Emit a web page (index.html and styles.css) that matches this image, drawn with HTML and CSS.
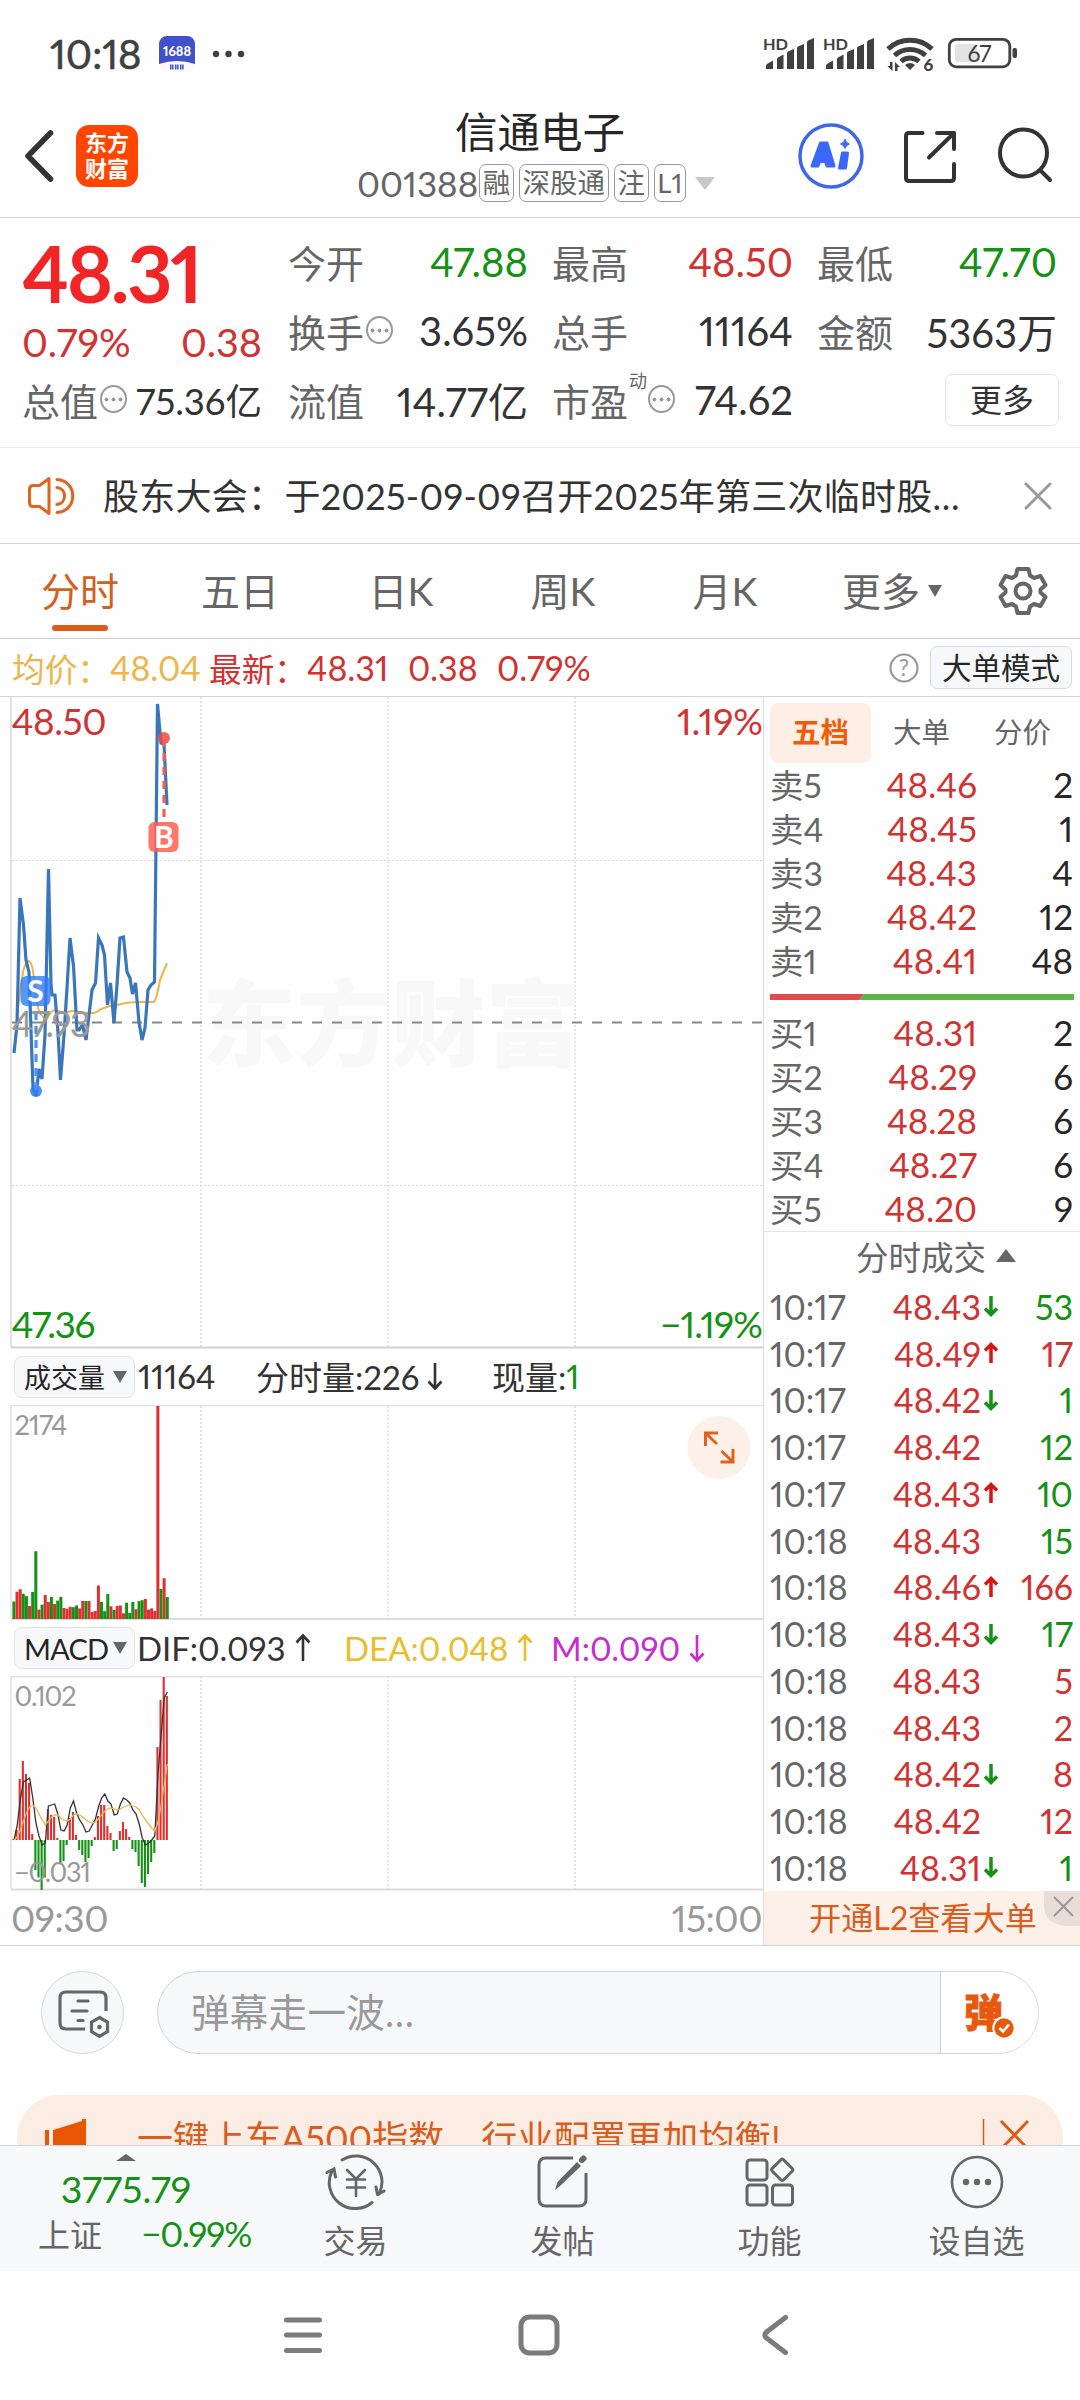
FILE: index.html
```html
<!DOCTYPE html>
<html lang="zh-CN">
<head>
<meta charset="utf-8">
<title>信通电子 001388</title>
<link rel="stylesheet" href="styles.css">
</head>
<body>
<div class="screen">
  <div class="status">
    <span class="clock">10:18</span>
    <svg class="app-badge" width="36" height="36" viewBox="0 0 36 36"><rect width="36" height="36" rx="8" fill="#fafaff"/><path d="M0 28V8a8 8 0 0 1 8-8h20a8 8 0 0 1 8 8v20Q18 22 0 28Z" fill="#4150cb"/><text x="18" y="20" font-size="13" font-weight="900" fill="#fff" text-anchor="middle" textLength="28" lengthAdjust="spacingAndGlyphs">1688</text><path d="M11 31h4M16 31h4M21 31h4" stroke="#4150cb" stroke-width="5" stroke-dasharray="1.5 .6"/></svg>
    <svg class="dots" width="34" height="8" viewBox="0 0 34 8" fill="#404040"><circle cx="4" cy="4" r="3.2"/><circle cx="16.500" cy="4" r="3.200"/><circle cx="29" cy="4" r="3.200"/></svg>
    <svg class="status-icons" width="260" height="40" viewBox="760 35 260 40" fill="#404040">
      <g id="sig"><text x="763" y="50.500" font-size="15.500" font-weight="700" textLength="25" lengthAdjust="spacingAndGlyphs">HD</text><path d="M766 70V67q0-1 1-2l6-3.500V70ZM777 70V60q0-1 1-1.500l5.500-3V70ZM787 70V54q0-1 1-1.500l6-2.500V70ZM797 70V49q0-1 1-1.500l6-2.500V70ZM807 70V44q0-2 1-2.500l6-2.500V70Z"/></g>
      <use href="#sig" x="60"/>
      <g fill="none" stroke="#404040" stroke-width="5"><path d="M888 50a32 32 0 0 1 44 0"/><path d="M894.500 56.500a23 23 0 0 1 31 0"/><path d="M901 62.500a13.500 13.500 0 0 1 18 0"/></g>
      <path d="M905 66q5-4 10 0l-5 5ZM890 63h2.500v9l-5-5h2.500ZM895 72v-9l5 5h-2.500v4Z"/>
      <text x="923.500" y="71.500" font-size="17" font-weight="900">6</text>
      <rect x="955" y="45" width="22" height="18" rx="3" fill="#e3e3e3"/>
      <rect x="949.300" y="40.300" width="60.500" height="27.500" rx="7" fill="none" stroke="#404040" stroke-width="2.800"/>
      <rect x="1012.500" y="49" width="4.500" height="10" rx="2"/>
      <text x="967.500" y="62.500" font-size="23" textLength="24">67</text>
    </svg>
  </div>

  <div class="header">
    <svg class="back" width="32" height="60" viewBox="25 126 32 60"><path d="M51.500 133 29 156l22.500 23" fill="none" stroke="#333" stroke-width="5.500" stroke-linecap="round" stroke-linejoin="round"/></svg>
    <div class="logo"><span>东方</span><span>财富</span></div>
    <div class="title">
      <h1>信通电子</h1>
      <div class="code"><span class="num">001388</span><b>融</b><b>深股通</b><b>注</b><b>L1</b><i class="tri-down"></i></div>
    </div>
    <svg class="head-icons" width="260" height="70" viewBox="796 121 260 70" fill="none" stroke="#333" stroke-width="4" stroke-linecap="round">
      <circle cx="831" cy="156" r="31" stroke="#3f66e6" stroke-width="3.500"/>
      <g fill="#3b67fb" stroke="#3b67fb" stroke-width="3" stroke-linejoin="round"><path fill-rule="evenodd" d="M812 166 820.500 143H827L834 166H827L825.500 161.500H819.500L818 166ZM821.500 155H825L823.500 150Z"/><path d="M842.500 153H847.500L845.500 168H839.500Z"/><path d="M845 139.500Q846 143 849.500 144 846 145 845 148.500 844 145 840.500 144 844 143 845 139.500Z" stroke-width="1"/></g>
      <path d="M922.500 133H909q-3 0-3 3V178q0 3 3 3h42q3 0 3-3V164M937 133h17V149M954 133 929 157.500" stroke-linejoin="round"/>
      <circle cx="1023.500" cy="153" r="23.500"/><path d="m1041 171 9 9"/>
    </svg>
  </div>

  <div class="quote">
    <div class="last">
      <strong>48.31</strong>
      <div class="pair red"><span>0.79%</span><span>0.38</span></div>
      <div class="pair cap"><label>总值<i class="more"></i></label><span>75.36亿</span></div>
    </div>
    <div class="facts">
      <div><label>今开</label><span class="green">47.88</span></div>
      <div><label>最高</label><span class="red">48.50</span></div>
      <div><label>最低</label><span class="green">47.70</span></div>
      <div><label>换手<i class="more"></i></label><span>3.65%</span></div>
      <div><label>总手</label><span>11164</span></div>
      <div><label>金额</label><span>5363万</span></div>
      <div><label>流值</label><span>14.77亿</span></div>
      <div><label>市盈<sup>动</sup><i class="more"></i></label><span>74.62</span></div>
      <div class="end"><button class="btn-more">更多</button></div>
    </div>
  </div>

  <div class="notice">
    <svg width="50" height="40" viewBox="26 475 50 40" fill="none" stroke="#df6420" stroke-width="3" stroke-linejoin="round" stroke-linecap="round"><path d="M49 477.500V512.500L39.500 505.500H33q-3.500 0-3.500-4V488.500q0-4 3.500-4h6.500ZM57 478.500c21 1 21 32 0 33M57 486.500c10 1 10 16 0 17"/></svg>
    <p>股东大会：于2025-09-09召开2025年第三次临时股…</p>
    <svg width="28" height="28" viewBox="0 0 28 28" stroke="#999" stroke-width="3" stroke-linecap="round"><path d="m2 2 24 24M26 2 2 26"/></svg>
  </div>

  <div class="tabs">
    <span class="on">分时</span><span>五日</span><span>日K</span><span>周K</span><span>月K</span><span>更多<i class="tri-small"></i></span>
    <svg class="gear" width="50" height="52" viewBox="-25 -26 50 52" fill="none" stroke="#666" stroke-width="4" stroke-linejoin="round"><path d="M-5.500-22H5.500L7-15.500 11-13 17.500-15 22.500-6 17.500-1.500V1.500L22.500 6 17.500 15 11 13 7 15.500 5.500 22H-5.500L-7 15.500-11 13-17.500 15-22.500 6-17.500 1.500V-1.500L-22.500-6-17.500-15-11-13-7-15.500Z"/><circle r="7.500"/></svg>
  </div>

  <div class="info">
    <span class="avg">均价：<em>48.04</em></span>
    <span class="new">最新：<em>48.31</em><em>0.38</em><em>0.79%</em></span>
    <svg class="help" width="30" height="30" viewBox="0 0 30 30"><circle cx="15" cy="15" r="13.500" fill="none" stroke="#999" stroke-width="2.200"/><text x="15" y="23" font-size="23" fill="#999" text-anchor="middle">?</text></svg>
    <button class="btn-mode">大单模式</button>
  </div>

  <div class="market">
    <div class="charts">
      <svg class="price-chart" width="763" height="652" viewBox="0 697 763 652">
        <text class="mark" x="202" y="1059" font-size="94" textLength="378">东方财富</text>
        <g class="grid"><path d="M201 697V1347M388 697V1347M575 697V1347M12 860.500H763M12 1185.500H763"/></g>
        <path d="M11 697V1348" stroke="#e2e2e2" stroke-width="2"/>
        <path d="M11 1347.500H763" stroke="#d0d0d0" stroke-width="2"/>
        <path d="M12 1022.500H763" stroke="#888" stroke-width="1.800" stroke-dasharray="10 10"/>
        <path d="M14 1053 18 1008Q21 984 23 972 26 960 29 961 33 964 34 980 36 1005 40 1013 43 1018 47 1019 51 1010 55 1010L63 1013 72 1011 86 1013H94Q98 1012 101 1009 108 1006 117 1005 127 1002 140 1002H154Q157 998 160 980L167 963" fill="none" stroke="#edb44c" stroke-width="2"/>
        <path d="M14 1053 17 1025 20 898 23.500 925 26 960 29 972 33 1088 36 1096 39 1069 42 1079 45 1035 48.500 869 51 984 52 995H55L58 1032 60.500 1080 64 1035 67 988 70 938 73.500 966 77 1030H79L82.500 1025 86 1040 89 1015 92 990 95.500 983 98.500 938 102 945 104.500 955 107.500 1005 110.500 983 114 1023 117 985 120 938 123.500 937 127 972 130 978 132.500 994 135.500 983 139 1022 142 1040 145 1028 148 990 151 985 154.500 982 157.500 704 161 743 164 744 167 805" fill="none" stroke="#3a76bb" stroke-width="3.200"/>
        <circle cx="36" cy="1091" r="6" fill="#2e7df5" opacity=".85"/><path d="M36 1012V1090" stroke="#4b93f7" stroke-width="3.200" stroke-dasharray="8 6"/>
        <circle cx="164" cy="738" r="6" fill="#ee4a40" opacity=".85"/><path d="M164 739V817" stroke="#ee6058" stroke-width="3.200" stroke-dasharray="8 6"/>
        <rect x="20.500" y="976" width="30" height="30" rx="6" fill="#2e7df5" opacity=".8"/><text x="35.500" y="1002" font-size="30" font-weight="700" text-anchor="middle" fill="#fff">S</text>
        <rect x="148.500" y="822" width="30" height="30" rx="6" fill="#fb6052" opacity=".85"/><text x="164" y="848" font-size="30" font-weight="700" text-anchor="middle" fill="#fff">B</text>
        <text class="red" x="11.500" y="734.500" font-size="37" textLength="95">48.50</text>
        <text class="red" x="677" y="734.500" font-size="37" textLength="86">1.19%</text>
        <text x="11.500" y="1036.500" font-size="36" fill="#999" textLength="79">47.93</text>
        <text class="green" x="11.500" y="1338" font-size="37" textLength="84">47.36</text>
        <text class="green" x="660" y="1338" font-size="37" textLength="103">−1.19%</text>
      </svg>

      <div class="ind"><button>成交量<i class="tri-small"></i></button><span class="v1">11164</span><span class="v2">分时量:226<svg class="arr" viewBox="0 0 16 30"><path d="M8 2V27M1.500 20.500 8 27.500 14.500 20.500"/></svg></span><span class="v3">现量:<em class="green">1</em></span></div>
      <svg class="vol-chart" width="763" height="215" viewBox="0 1405 763 215">
        <g class="grid"><path d="M201 1406V1619M388 1406V1619M575 1406V1619"/></g>
        <path d="M11 1619V1405.500H763" fill="none" stroke="#e0e0e0" stroke-width="1.500"/><path d="M11 1619H763" stroke="#d0d0d0" stroke-width="1.600"/>
        <g id="volume"></g>
        <text x="14.500" y="1434.500" font-size="27" fill="#999" textLength="53">2174</text>
        <circle cx="719" cy="1447.500" r="31.500" fill="#fdf0e9"/>
        <path d="M717 1444 705.500 1433M705.500 1446V1433H718M721.500 1451 733 1462M733 1449V1462H720.500" fill="none" stroke="#dc6320" stroke-width="3"/>
      </svg>

      <div class="ind macd"><button>MACD<i class="tri-small"></i></button><span class="m1">DIF:0.093<svg class="arr" viewBox="0 0 16 30"><path d="M8 28V3M1.500 9.500 8 2.500 14.500 9.500"/></svg></span><span class="m2">DEA:0.048<svg class="arr" viewBox="0 0 16 30"><path d="M8 28V3M1.500 9.500 8 2.500 14.500 9.500"/></svg></span><span class="m3">M:0.090<svg class="arr" viewBox="0 0 16 30"><path d="M8 2V27M1.500 20.500 8 27.500 14.500 20.500"/></svg></span></div>
      <svg class="macd-chart" width="763" height="215" viewBox="0 1676 763 215">
        <g class="grid"><path d="M201 1676V1889M388 1676V1889M575 1676V1889"/></g>
        <path d="M11 1889V1676.500H763" fill="none" stroke="#e0e0e0" stroke-width="1.500"/><path d="M11 1889.500H763" stroke="#dcdcdc" stroke-width="2"/>
        <g id="macd"></g>
        <path id="dif" fill="none" stroke="#333" stroke-width="1.300"/>
        <path id="dea" fill="none" stroke="#edb44c" stroke-width="1.300"/>
        <text x="14.500" y="1705.500" font-size="27" fill="#999" textLength="62">0.102</text>
        <text x="14" y="1881.500" font-size="27" fill="#999" textLength="77">−0.031</text>
      </svg>
      <div class="axis"><span>09:30</span><span>15:00</span></div>
    </div>

    <div class="side">
      <div class="side-tabs"><span class="on">五档</span><span>大单</span><span>分价</span></div>
      <div class="book">
        <div><label>卖5</label><b>48.46</b><i>2</i></div>
        <div><label>卖4</label><b>48.45</b><i>1</i></div>
        <div><label>卖3</label><b>48.43</b><i>4</i></div>
        <div><label>卖2</label><b>48.42</b><i>12</i></div>
        <div><label>卖1</label><b>48.41</b><i>48</i></div>
      </div>
      <svg class="ratio" width="304" height="6" viewBox="0 0 304 6"><path d="M0 0H94L89 6H0Z" fill="#e34a4a"/><path d="M94 0H304V6H89Z" fill="#5bb646"/></svg>
      <div class="book">
        <div><label>买1</label><b>48.31</b><i>2</i></div>
        <div><label>买2</label><b>48.29</b><i>6</i></div>
        <div><label>买3</label><b>48.28</b><i>6</i></div>
        <div><label>买4</label><b>48.27</b><i>6</i></div>
        <div><label>买5</label><b>48.20</b><i>9</i></div>
      </div>
      <div class="deal-head">分时成交<i class="tri-up"></i></div>
      <div class="deals" id="deals"></div>
      <div class="l2"><span>开通L2查看大单</span><svg class="l2-close" width="36" height="35" viewBox="0 0 36 35"><path d="M0 0H36V35H22Q0 33 0 14Z" fill="#e9ddd8"/><path d="m10 6 19 19M29 6 10 25" stroke="#999" stroke-width="2"/></svg></div>
    </div>
  </div>

  <div class="barrage">
    <div class="round"><svg width="54" height="52" viewBox="0 0 54 52" fill="none" stroke="#666" stroke-width="3.200" stroke-linecap="round"><path d="M28 42H9q-6 0-6-6V11q0-6 6-6H43q6 0 6 6V24" stroke-linecap="butt"/><path d="M21 14H31M15 24H30M21 33.500H26"/><path d="m42.500 30.500 8 4.700v9.400l-8 4.700-8-4.700v-9.400Z"/><circle cx="42.500" cy="40" r="2.300" fill="#666" stroke="none"/></svg></div>
    <div class="field"><span>弹幕走一波…</span><div class="send"><b>弹</b><svg class="tick" width="24" height="24" viewBox="0 0 24 24"><circle cx="12" cy="12" r="10.700" fill="#e6590f" stroke="#fff" stroke-width="2"/><path d="m7.500 12 3.500 3.500 6-7" fill="none" stroke="#fff" stroke-width="2.600"/></svg></div></div>
  </div>

  <div class="promo-wrap"><div class="promo">
    <svg width="44" height="48" viewBox="44 2113 44 48" fill="#ea5504"><path d="M45 2130h4v24h-4ZM53 2130 82 2121V2119H86V2161L53 2155Z"/></svg>
    <p>一键上车A500指数<span>行业配置更加均衡!</span></p>
    <svg width="50" height="40" viewBox="981 2118 50 40" fill="none" stroke="#dd5b17"><path d="M982.500 2120V2153" stroke-width="1.500"/><path d="m1000 2122 27 28M1027 2122 1000 2150" stroke-width="3"/></svg>
  </div></div>

  <div class="dock">
    <div class="index"><i class="tri-up flat"></i><strong>3775.79</strong><div><label>上证</label><span>−0.99%</span></div></div>
    <div class="item"><svg width="62" height="56" viewBox="-31 -28 62 56" fill="none" stroke="#666" stroke-width="3" stroke-linecap="round"><path d="M-14-22A26 26 0 0 1 23 12M16 20.500A26 26 0 0 1-24-11"/><path d="M21.500 12.500 28 9M21.500 12.500 20 5M-29-9.500-22-13-20.500-5"/><path d="m-9-12 9 9 9-9M0-3V14M-9-2.500H9M-9 5.500H9" stroke-width="2.600"/></svg><span>交易</span></div>
    <div class="item"><svg width="54" height="56" viewBox="-27 -28 54 56" fill="none" stroke="#666" stroke-width="3"><path d="M10-24H-17q-7 0-7 7V17q0 7 7 7H16q7 0 7-7V-9"/><path d="m-8 8 2.500-8L14-20l4 4-21 20Z" fill="#666" stroke="none"/><path d="m19-22 1.500-1.500" stroke-width="6" stroke-linecap="round"/></svg><span>发帖</span></div>
    <div class="item"><svg width="54" height="56" viewBox="-27 -28 54 56" fill="none" stroke="#666" stroke-width="3"><rect x="-23" y="-22" width="20" height="20" rx="3"/><rect x="-23" y="3" width="20" height="20" rx="3"/><rect x="2.500" y="3" width="20" height="20" rx="3"/><rect x="4.200" y="-20.200" width="16" height="16" rx="2" transform="rotate(45 12.200 -12.200)"/></svg><span>功能</span></div>
    <div class="item"><svg width="54" height="56" viewBox="-27 -28 54 56"><circle r="25" fill="none" stroke="#666" stroke-width="2.600"/><g fill="#666"><circle cx="-11" r="3.200"/><circle r="3.200"/><circle cx="11" r="3.200"/></g></svg><span>设自选</span></div>
  </div>

  <div class="sysnav">
    <svg width="40" height="40" viewBox="0 0 40 40" stroke="#7b7b7b" stroke-width="5" stroke-linecap="round"><path d="M3.500 5H36.500M3.500 20H36.500M3.500 35.500H36.500"/></svg>
    <svg width="42" height="42" viewBox="0 0 42 42"><rect x="3" y="3" width="36" height="36" rx="8.500" fill="none" stroke="#7b7b7b" stroke-width="5"/></svg>
    <svg width="28" height="42" viewBox="0 0 28 42"><path d="M24.500 3.500 5.500 18q-3.500 3 0 6l19 14.500" fill="none" stroke="#7b7b7b" stroke-width="5" stroke-linecap="round"/></svg>
  </div>
</div>
<script src="app.js"></script>
</body>
</html>
```
FILE: styles.css
```css
* { box-sizing: border-box; }
body { margin: 0; background: #fefefe; color: #333; font-family: Lato, "Noto Sans CJK SC", sans-serif; font-size: 36px; font-variant-numeric: proportional-nums; font-feature-settings: "kern" 1; }
i, em { font-style: normal; }
b { font-weight: 400; }
p, h1 { margin: 0; font-weight: 400; }
button { font: inherit; color: inherit; margin: 0; padding: 0; white-space: nowrap; }
svg { display: block; flex: none; }
.screen { width: 1080px; height: 2400px; overflow: hidden; display: flex; flex-direction: column; white-space: nowrap; }
.screen > div { flex: none; }
.red { color: #cf3332; fill: #cf3332; }
.green { color: #159215; fill: #159215; }

.status { height: 108px; display: flex; align-items: center; padding: 0 60px 0 50px; color: #404040; }
.clock { font-size: 40px; width: 109px; -webkit-text-stroke: .5px; }
.dots { margin-left: 17px; }
.status-icons { margin-left: auto; }

.header { height: 110px; border-bottom: 1px solid #d4d4d4; display: flex; align-items: center; padding: 0 24px 14px 24px; }
.logo { width: 62px; height: 62px; margin-left: 20px; border-radius: 13px; background: #ff4500; color: #fff; display: flex; flex-direction: column; align-items: center; justify-content: center; font-size: 22px; font-weight: 700; line-height: 26px; }
.title { width: 365px; margin-left: 219px; padding-top: 9px; display: flex; flex-direction: column; }
.title h1 { font-size: 42.500px; line-height: 46px; padding-left: 98px; color: #262626; }
.code { display: flex; align-items: center; height: 56px; color: #666; gap: 5px; }
.code .num { font-size: 35px; width: 117px; }
.code b { height: 38px; line-height: 35px; border: 1.500px solid #999; border-radius: 7px; font-size: 27.500px; padding: 0 2.700px; }
.tri-down { border: 10px solid transparent; border-top: 13px solid #c8c8c8; border-bottom: 0; margin-left: 4px; }
.head-icons { margin-left: auto; }

.quote { height: 230px; border-bottom: 1px solid #ececec; padding: 9px 23px 0 22px; display: flex; gap: 26px; }
.last { width: 241px; display: flex; flex-direction: column; }
.last strong { font-size: 79px; height: 91px; line-height: 91px; color: #f12525; font-weight: 700; letter-spacing: -2.500px; }
.pair { display: flex; justify-content: space-between; align-items: center; height: 47px; font-size: 39.500px; }
.pair.cap { height: 69px; font-size: 36.500px; }
label { color: #666; display: inline-flex; align-items: center; font-size: 38px; }
.more { width: 27px; height: 28px; border: 2px solid #999; border-radius: 50%; margin: -1px 0 0 2px; background: radial-gradient(circle, #999 1.800px, transparent 2.200px) 50% 50% / 7px 7px no-repeat, radial-gradient(circle, #999 1.800px, transparent 2.200px) 1px 50% / 7px 7px no-repeat, radial-gradient(circle, #999 1.800px, transparent 2.200px) 15px 50% / 7px 7px no-repeat; }
.facts { display: grid; grid-template-columns: 240px 241px 240px; grid-template-rows: repeat(3, 69px); column-gap: 24px; font-size: 40px; }
.facts > div { display: flex; justify-content: space-between; align-items: center; }
.facts sup { font-size: 18px; align-self: flex-start; line-height: 18px; margin: 0 -1px 0 1px; }
.facts .end { justify-content: flex-end; }
.btn-more { width: 114px; height: 52px; border: 1.500px solid #e4e6e8; border-radius: 7px; background: #fff; font-size: 32px; line-height: 47px; margin-right: -2px; }

.notice { height: 96px; border-bottom: 1px solid #d4d4d4; display: flex; align-items: center; padding: 0 28px 0 26px; }
.notice p { margin-left: 27px; flex: 1; font-size: 36px; letter-spacing: .28px; padding-bottom: 4px; }

.tabs { height: 95px; border-bottom: 1px solid #d0d0d0; display: grid; grid-template-columns: 160px 160px 162px 162px 162px 156px 1fr; align-items: center; justify-items: center; font-size: 39px; color: #666; }
.tabs span { height: 94px; line-height: 93px; display: flex; align-items: center; position: relative; }
.tabs .on { color: #d2601f; }
.tabs .on::after { content: ""; position: absolute; left: 50%; bottom: 7px; width: 56px; height: 6px; margin-left: -28px; border-radius: 3px; background: #dc5c15; }
.tri-small { border: 7px solid transparent; border-top: 12px solid #666; border-bottom: 0; margin-left: 8px; }
.tabs > span:nth-child(6) { padding-left: 16px; }
.gear { margin-left: 4px; }

.info { height: 58px; border-bottom: 1px solid #d4d4d4; display: flex; align-items: center; font-size: 32.700px; padding: 0 8px 0 12px; }
.info span { display: flex; align-items: center; }
.info em { font-size: 34px; }
.avg { color: #ebb64c; width: 197px; }
.new { color: #cf3332; gap: 0; }
.new em + em { margin-left: 19.500px; }
.help { margin-left: auto; margin-right: 11px; }
.btn-mode { width: 142px; height: 43px; border: 1.500px solid #d8dadd; border-radius: 7px; background: #f7f8fa; color: #262626; font-size: 29.500px; line-height: 38px; }

.market { height: 1249px; display: flex; border-bottom: 1px solid #d4d4d4; }
.charts { width: 763px; }
.grid path { stroke: #d6d6d6; stroke-width: 1.200; stroke-dasharray: 2 2; fill: none; }
.mark { fill: #f8f8f8; font-weight: 900; }
.ind { height: 56px; display: flex; align-items: center; font-size: 33px; padding-left: 14px; }
.ind button { width: 121px; height: 42px; border: 1.500px solid #e2e4e7; border-radius: 8px; background: #f7f8fa; font-size: 27px; line-height: 37px; display: flex; align-items: center; padding-left: 9px; color: #262626; }
.ind button .tri-small { margin-left: auto; margin-right: 7px; }
.macd button { font-size: 29px; letter-spacing: -.8px; }
.ind > span { display: flex; align-items: center; margin: -2px 0 0 3px; }
.arr { width: 16px; height: 30px; fill: none; stroke: currentColor; stroke-width: 2.600; margin-left: 9px; }
.ind .v1 { width: 115px; }
.ind .v2 { width: 233px; }
.ind .v2 .arr { margin-left: 8px; }
.ind .m1 { width: 204px; margin-left: 2px; }
.ind .m2 { width: 204px; color: #e8be2a; }
.ind .m3 { color: #c42dcf; }
.ind.macd > span { margin-top: -1px; }
.axis { height: 53px; display: flex; justify-content: space-between; align-items: center; color: #999; font-size: 37px; letter-spacing: -.5px; padding: 0 1px 0 11px; }

.side { width: 317px; border-left: 1.500px solid #dcdcdc; }
.side-tabs { height: 66px; padding: 6px 0 0 6px; display: flex; font-size: 28.500px; color: #666; }
.side-tabs span { width: 101px; height: 60px; line-height: 58px; text-align: center; border-radius: 8px; }
.side-tabs .on { background: #fdeee6; color: #ee5c0c; font-weight: 700; }
.book { position: relative; top: -5px; padding-top: 1px; }
.book > div, .deals > div { height: 44px; display: grid; grid-template-columns: 88px 119px 1fr; align-items: center; padding: 0 7px 0 6px; font-size: 35px; }
.book label { font-size: 33.500px; }
.book b, .deals b { color: #cf3332; text-align: right; }
.book i, .deals i { text-align: right; color: #262626; }
.ratio { margin: 10px 0 11px 6px; }
.deal-head { height: 52px; margin-top: -1px; border-top: 1px solid #e4e4e4; display: flex; align-items: center; justify-content: center; padding: 0 0 4px 28px; font-size: 32.500px; color: #666; gap: 10px; }
.tri-up { border: 10px solid transparent; border-bottom: 13px solid #666; border-top: 0; }
.deals > div { height: 46.750px; font-size: 34px; grid-template-columns: 102px 109px 24px 1fr; padding-left: 6px; }
.deals > div > span { color: #666; }
.deals svg { width: 16px; height: 24px; margin-left: 2px; fill: none; stroke-width: 3.500; }
.deals svg.up { stroke: #d81313; }
.deals svg.down { stroke: #159215; }
.deals .r { color: #cf3332; }
.deals .g { color: #159215; }
.l2 { height: 54px; background: #fcf0e9; color: #d95d20; display: flex; align-items: center; padding: 0 0 3px 45px; font-size: 32.200px; position: relative; }
.l2-close { position: absolute; right: 0; top: 0; }

.barrage { height: 149px; display: flex; padding: 25px 41px 0; gap: 33px; }
.round { width: 83px; height: 83px; border: 1.500px solid #d6d8dd; border-radius: 50%; background: #f7f8fa; display: flex; align-items: center; justify-content: center; padding-left: 3px; }
.field { flex: 1; height: 83px; border: 1.500px solid #d0d4d9; border-radius: 42px; background: #f7f8fa; overflow: hidden; display: flex; justify-content: space-between; align-items: center; color: #999; font-size: 38.500px; letter-spacing: .3px; padding-left: 33px; }
.field > span { padding-bottom: 5px; }
.send { width: 98px; height: 81px; border-left: 1.500px solid #d0d4d9; background: #fff; color: #e6590f; display: flex; align-items: center; padding: 0 0 6px 23px; position: relative; }
.send b { font-weight: 900; font-size: 39px; -webkit-text-stroke: .8px; }
.tick { position: absolute; left: 51px; top: 44px; }

.promo-wrap { height: 50px; overflow: hidden; padding: 0 17px; }
.promo { height: 84px; border-radius: 42px; background: #fcede4; color: #d95d20; display: flex; align-items: center; padding: 0 31px 0 27px; }
.promo p { flex: 1; margin-left: 49px; padding-bottom: 3px; }
.promo p span { margin-left: 37px; letter-spacing: .2px; }

.dock { height: 126px; border-top: 1.500px solid #d0d3d8; background: #f7f8fa; display: grid; grid-template-columns: 252px 207px 207px 207px 207px; font-size: 32px; color: #666; }
.item { display: flex; flex-direction: column; align-items: center; padding-top: 8px; }
.item span { line-height: 44px; margin-top: 9px; }
.index { display: flex; flex-direction: column; align-items: center; padding-top: 8px; }
.index .flat { border-bottom-width: 7px; }
.index strong { font-weight: 400; font-size: 37.500px; line-height: 44px; margin-top: 6px; color: #159215; }
.index div { display: flex; align-items: center; justify-content: space-between; width: 100%; padding: 0 1px 0 38px; height: 44px; font-size: 35px; letter-spacing: -1.200px; color: #159215; }
.index label { font-size: 32px; letter-spacing: 0; }

.sysnav { height: 127px; display: flex; align-items: center; padding-left: 283px; }
.sysnav svg:nth-child(2) { margin-left: 195px; }
.sysnav svg:nth-child(3) { margin-left: 201px; }
```
FILE: app.js
```js
const NS = 'http://www.w3.org/2000/svg';
const RED = '#dd3030', GREEN = '#159215';
const STEP = 3.13, X0 = 12.4;

function bar(group, i, top, height, color, width) {
  const r = document.createElementNS(NS, 'rect');
  r.setAttribute('x', X0 + i * STEP);
  r.setAttribute('y', top);
  r.setAttribute('width', width);
  r.setAttribute('height', height);
  r.setAttribute('fill', color);
  group.appendChild(r);
}

// Volume per minute: positive is an up minute, negative a down minute
const volume = [-17.5, 27.3, 29.8, -25.3, -22.9, 13, -27, -67.8, 9.4, -14.3, 24, 17, -22, 15, -18.4, -22, 11, 10.2, 12.2, -11.8, -13.5, 10.6, 18, -18, 18, 7, 8, 33.5, -17, -7.8, -25, 12.7, -9, 13, 13.5, 5.7, -16.3, -6, -17, 9.8, -18, -18.8, 20, 9.4, 10.6, 8, 213, -30.2, 40.8, -22];
const vg = document.getElementById('volume');
volume.forEach((v, i) => bar(vg, i, 1619 - Math.abs(v), Math.abs(v), v > 0 ? RED : GREEN, 3));

const macd = [1, 10, 61, 79, 66, 57, 6, -30, -37.5, -50, -37.5, 31, 25, 23, 2, -23, -21, -5, 22, 28, 5, -10, -15, -22, -18, -6, 3, 24, 35, 35, 14, 7, -11, -9, 9, 18, 11, 3, -9, -12, -26, -43, -47, -34, -22, -13, 93, 140, 163, 144];
const mg = document.getElementById('macd');
macd.forEach((v, i) => bar(mg, i, v > 0 ? 1840 - v : 1840, Math.abs(v), v > 0 ? RED : GREEN, 2.1));

const dif = [0, 14, 40, 58, 60, 62, 42, 17, 4, -5, -3, 34, 35, 36, 26, 10, 9, 15, 32, 39, 27, 20, 15, 8, 9, 15, 21, 33, 42, 46, 39, 36, 25, 26, 36, 42, 40, 37, 30, 26, 16, 2, -5, -3, 0, 4, 66, 104, 142, 148];
const dea = [0, 3, 10, 19, 27, 33, 35, 32, 26, 20, 15, 19, 23, 25, 25, 22, 20, 19, 21, 25, 26, 25, 23, 20, 18, 17, 18, 21, 25, 29, 31, 32, 31, 30, 31, 33, 34, 35, 34, 33, 30, 25, 20, 16, 12, 9, 18, 34, 55, 76];
const line = (id, d) => document.getElementById(id).setAttribute('d',
  d.map((v, i) => (i ? 'L' : 'M') + (14 + i * STEP).toFixed(1) + ' ' + (1840 - v)).join(''));
line('dif', dif);
line('dea', dea);

const deals = [
  ['10:17', '48.43', 'down', 53, 'g'], ['10:17', '48.49', 'up', 17, 'r'], ['10:17', '48.42', 'down', 1, 'g'],
  ['10:17', '48.42', '', 12, 'g'], ['10:17', '48.43', 'up', 10, 'g'], ['10:18', '48.43', '', 15, 'g'],
  ['10:18', '48.46', 'up', 166, 'r'], ['10:18', '48.43', 'down', 17, 'g'], ['10:18', '48.43', '', 5, 'r'],
  ['10:18', '48.43', '', 2, 'r'], ['10:18', '48.42', 'down', 8, 'r'], ['10:18', '48.42', '', 12, 'r'],
  ['10:18', '48.31', 'down', 1, 'g']
];
const arrows = { up: 'M8 22V3M2 9.500 8 3.500 14 9.500', down: 'M8 2V21M2 14.500 8 20.500 14 14.500' };
document.getElementById('deals').innerHTML = deals.map(([t, p, a, n, c]) =>
  `<div><span>${t}</span><b>${p}</b>${a ? `<svg class="${a}" viewBox="0 0 16 24"><path d="${arrows[a]}"/></svg>` : '<u></u>'}<i class="${c}">${n}</i></div>`).join('');
```
